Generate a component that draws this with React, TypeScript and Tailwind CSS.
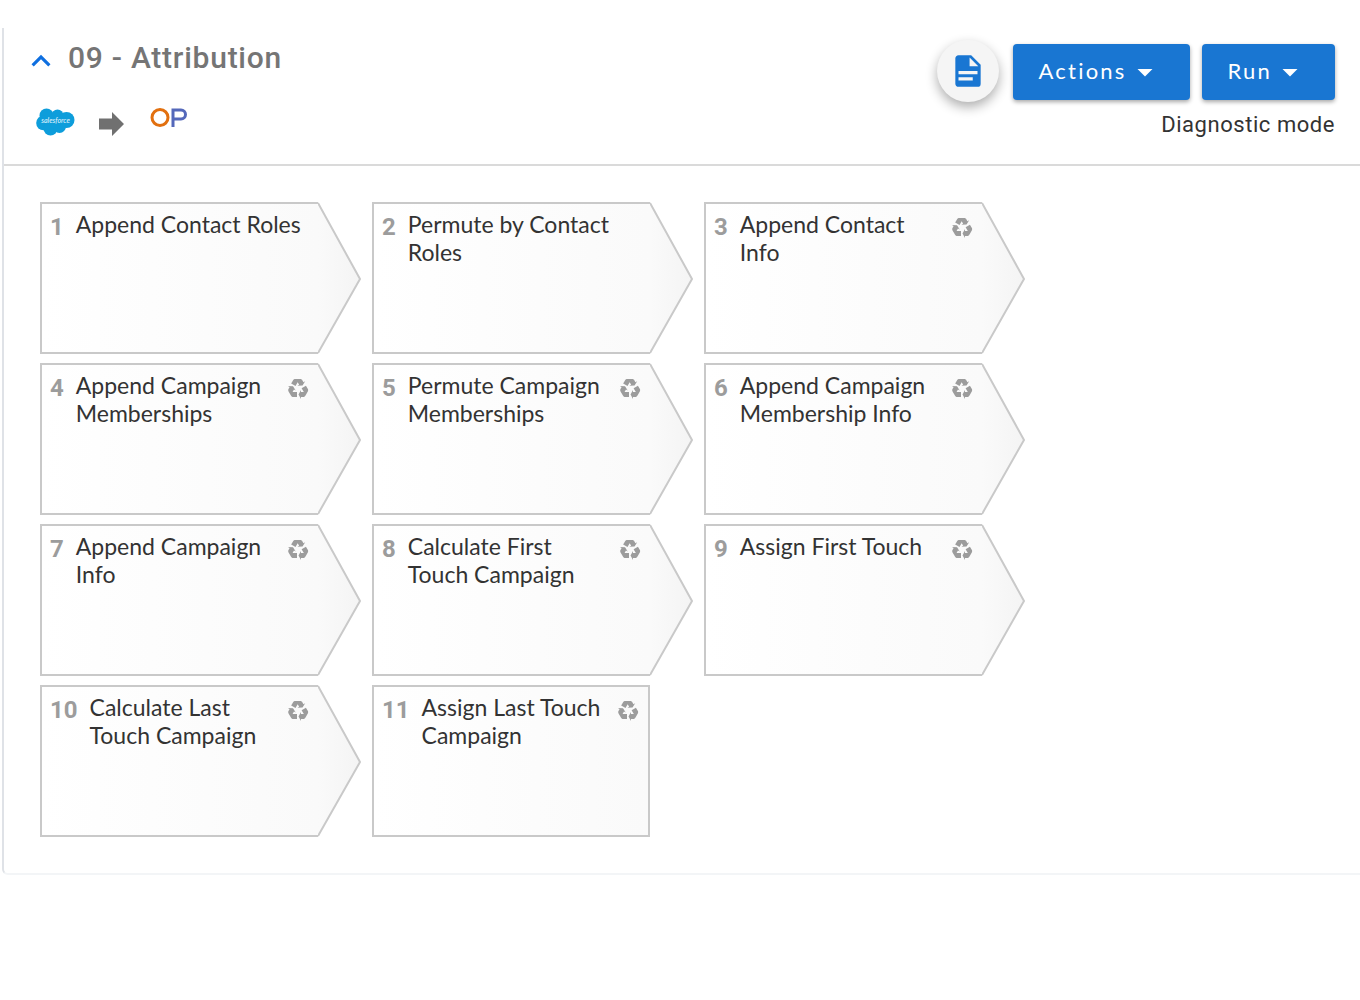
interface Step {
    title: string;
    recycled: boolean;
}

const steps: Step[] = [
    { title: 'Append Contact Roles', recycled: false },
    { title: 'Permute by Contact Roles', recycled: false },
    { title: 'Append Contact Info', recycled: true },
    { title: 'Append Campaign Memberships', recycled: true },
    { title: 'Permute Campaign Memberships', recycled: true },
    { title: 'Append Campaign Membership Info', recycled: true },
    { title: 'Append Campaign Info', recycled: true },
    { title: 'Calculate First Touch Campaign', recycled: true },
    { title: 'Assign First Touch', recycled: true },
    { title: 'Calculate Last Touch Campaign', recycled: true },
    { title: 'Assign Last Touch Campaign', recycled: true },
];

interface IconProps {
    path: string;
    className: string;
}

function Icon({ path, className }: IconProps) {
    return (
        <svg viewBox="0 0 24 24" fill="currentColor" aria-hidden="true" className={className}>
            <path d={path} />
        </svg>
    );
}

const chevronUp = 'M7.41,15.41L12,10.83L16.59,15.41L18,14L12,8L6,14L7.41,15.41Z';
const menuDown = 'M7,10L12,15L17,10H7Z';
const fileDocument =
    'M13,9H18.5L13,3.5V9M6,2H14L20,8V20A2,2 0 0,1 18,22H6C4.89,22 4,21.1 4,20V4C4,2.89 4.89,2 6,2M15,18V16H6V18H15M18,14V12H6V14H18Z';
const recycle =
    'M21.82,15.42L19.32,19.75C18.83,20.61 17.92,21.06 17,21H15V23L12.5,18.5L15,14V16H17.82L15.6,12.15L19.93,9.65L21.73,12.77C22.25,13.54 22.32,14.57 21.82,15.42M9.21,3.06H14.21C15.19,3.06 16.04,3.63 16.45,4.45L17.45,6.19L19.18,5.19L16.54,9.6L11.39,9.69L13.12,8.69L11.71,6.24L9.5,10.09L5.16,7.59L6.96,4.47C7.37,3.64 8.22,3.06 9.21,3.06M5.05,19.76L2.55,15.43C2.06,14.58 2.13,13.56 2.64,12.79L3.64,11.06L1.91,10.06L7.05,10.14L9.7,14.56L7.97,13.56L6.56,16H11V21H7.4C6.47,21.07 5.55,20.61 5.05,19.76Z';

function SalesforceLogo() {
    return (
        <svg viewBox="0 0 39 28" role="img" aria-label="Salesforce" className="w-[39px] h-7">
            <g fill="#0d9ddb">
                <circle cx="10.5" cy="7.5" r="7" />
                <circle cx="21.5" cy="7.5" r="6" />
                <circle cx="30.5" cy="12" r="8" />
                <circle cx="7.5" cy="15" r="7.3" />
                <circle cx="14.5" cy="20.5" r="7" />
                <circle cx="23.5" cy="18.5" r="6.5" />
                <rect x="9" y="8" width="20" height="12" />
            </g>
            <text
                x="19.5"
                y="15"
                textAnchor="middle"
                fill="#e6f6fd"
                fontSize="7"
                fontStyle="italic"
                fontFamily="Lato, sans-serif"
            >
                salesforce
            </text>
        </svg>
    );
}

function OpLogo() {
    return (
        <svg viewBox="0 0 38 20" fill="none" role="img" aria-label="OP" className="w-[38px] h-5">
            <circle cx="10" cy="9.5" r="8" stroke="#e2700f" strokeWidth="3" />
            <path d="M23 19V2H31a4.4 4.4 0 0 1 0 9H23" stroke="#5468ba" strokeWidth="3" />
        </svg>
    );
}

interface MenuButtonProps {
    label: string;
}

function MenuButton({ label }: MenuButtonProps) {
    return (
        <button
            type="button"
            className="flex items-center h-14 pl-[26px] pr-[27px] rounded bg-[#1976d2] text-white text-[22px] tracking-widest shadow-[0_2px_4px_rgba(0,0,0,0.35)]"
        >
            <span className="pb-1">{label}</span>
            <Icon path={menuDown} className="size-9" />
        </button>
    );
}

interface StepCardProps {
    step: Step;
    number: number;
    last: boolean;
}

function StepCard({ step, number, last }: StepCardProps) {
    return (
        <li className="flex h-[152px]">
            <div
                className={`flex items-start w-[278px] px-2 pt-[6px] border-2 border-[#c9c9c9] bg-linear-to-r from-white to-[#fafafa] ${last ? '' : 'border-r-0'}`}
            >
                <span className="mr-3 mt-[3px] font-[Roboto] font-bold text-2xl leading-7 text-[#9c9c9c]">
                    {number}
                </span>
                <span className="flex-1 text-[23px] leading-7 text-[#333]">{step.title}</span>
                {step.recycled && (
                    <Icon path={recycle} className="shrink-0 ml-2 mt-[5px] size-6 text-[#9c9c9c]" />
                )}
            </div>
            {!last && (
                <svg viewBox="0 0 43 152" aria-hidden="true" className="w-[43px] h-full">
                    <defs>
                        <linearGradient id={`tip-${number}`}>
                            <stop offset="0" stopColor="#fafafa" />
                            <stop offset="1" stopColor="#f4f4f4" />
                        </linearGradient>
                    </defs>
                    <path
                        d="M0 1L42 77L0 151"
                        fill={`url(#tip-${number})`}
                        stroke="#c9c9c9"
                        strokeWidth="2"
                    />
                </svg>
            )}
        </li>
    );
}

export default function App() {
    return (
        <div className="min-h-screen bg-white pt-7 pl-[2px] font-[Lato,sans-serif]">
            <section className="border-l-2 border-b-2 border-l-[#dfe2e7] border-b-[#f3f5f7] rounded-bl-md">
                <header className="flex justify-between h-[138px] pl-[18px] pr-[25px] border-b-2 border-[#dadada]">
                    <div>
                        <div className="flex items-start gap-2 pt-3">
                            <button type="button" aria-label="Collapse" className="mt-[2px] text-[#0f6fe0]">
                                <Icon path={chevronUp} className="size-[38px]" />
                            </button>
                            <h1 className="font-[Roboto] font-medium text-3xl leading-9 tracking-wide text-[#757575]">
                                09 - Attribution
                            </h1>
                        </div>
                        <div className="flex items-start mt-7 pl-[14px]">
                            <SalesforceLogo />
                            <svg
                                viewBox="0 0 25 24"
                                fill="#707070"
                                aria-hidden="true"
                                className="w-[25px] h-6 mt-1 ml-6"
                            >
                                <path d="M0 6.5H13V0L25 12L13 24V17.5H0Z" />
                            </svg>
                            <span className="ml-[26px]">
                                <OpLogo />
                            </span>
                        </div>
                    </div>
                    <div className="flex flex-col items-end pt-4">
                        <div className="flex items-start gap-3">
                            <button
                                type="button"
                                aria-label="Notes"
                                className="flex items-center justify-center size-[62px] -mt-1 mr-[2px] rounded-full bg-[#f5f5f5] text-[#1976d2] shadow-[0_5px_12px_rgba(0,0,0,0.32)]"
                            >
                                <Icon path={fileDocument} className="size-[38px]" />
                            </button>
                            <MenuButton label="Actions" />
                            <MenuButton label="Run" />
                        </div>
                        <p className="mt-[7px] font-[Roboto] text-[22px] leading-8 tracking-wide text-[#333]">
                            Diagnostic mode
                        </p>
                    </div>
                </header>
                <ol className="flex flex-wrap gap-x-[11px] gap-y-[9px] px-9 pt-9 pb-9">
                    {steps.map((step, index) => (
                        <StepCard
                            key={step.title}
                            step={step}
                            number={index + 1}
                            last={index === steps.length - 1}
                        />
                    ))}
                </ol>
            </section>
        </div>
    );
}
